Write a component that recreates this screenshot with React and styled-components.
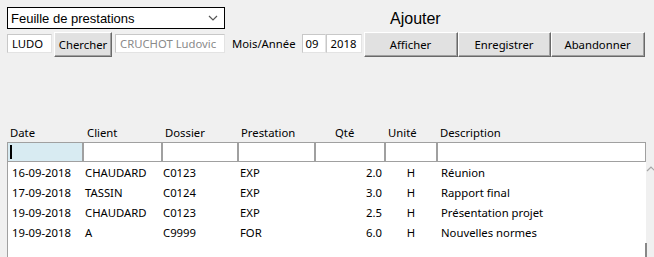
import React, { useState } from 'react';
import styled, { createGlobalStyle } from 'styled-components';

const GlobalStyle = createGlobalStyle`
  html, body {
    margin: 0;
    padding: 0;
    background: #f0f0f0;
    overflow: hidden;
  }
  body {
    font-family: "Noto Sans", "Open Sans", sans-serif;
    font-size: 11.3px;
    color: #000;
  }
`;

const Page = styled.div`
  width: 654px;
  height: 257px;
  padding: 7px 0 0 7px;
  box-sizing: border-box;
  display: flex;
  flex-direction: column;
  overflow: hidden;
`;

const TopRow = styled.div`
  display: flex;
  align-items: flex-start;
  height: 25px;
`;

const Select = styled.div`
  width: 218px;
  height: 22px;
  box-sizing: border-box;
  border: 1px solid #000;
  background: #fff;
  display: flex;
  align-items: center;
  justify-content: space-between;
  padding: 0 6px 0 3px;
  font-family: "Liberation Sans", Arial, sans-serif;
  font-size: 13px;
`;

const Title = styled.div`
  margin: 3px 0 0 165px;
  font-family: "Liberation Sans", Arial, sans-serif;
  font-size: 16px;
  line-height: 18px;
`;

const ToolRow = styled.div`
  display: flex;
  align-items: flex-start;
  height: 26px;
`;

const Field = styled.div`
  width: ${(p) => p.w}px;
  height: 19px;
  margin-top: 2px;
  margin-right: ${(p) => p.mr || 0}px;
  box-sizing: border-box;
  background: #fff;
  border: 1px solid #e3e3e3;
  border-top-color: #c8c8c8;
  border-left-color: #c8c8c8;
  color: ${(p) => (p.muted ? '#8a8a8a' : '#000')};
  padding-left: ${(p) => p.pl || 3}px;
  line-height: 17px;
  white-space: nowrap;
  overflow: hidden;
`;

const Label = styled.div`
  line-height: 19px;
  margin: 2px 6px 0 7px;
`;

const Button = styled.button`
  width: ${(p) => p.w}px;
  height: 25px;
  margin-right: ${(p) => p.mr || 0}px;
  box-sizing: border-box;
  background: #e1e1e1;
  border: 1px solid #fff;
  border-right-color: #696969;
  border-bottom-color: #696969;
  box-shadow: inset -1px -1px 0 #a0a0a0, inset 1px 1px 0 #e3e3e3;
  font-family: "Noto Sans", "Open Sans", sans-serif;
  font-size: 11.3px;
  color: #000;
  padding: 0;
`;

const Spacer = styled.div`
  height: 66px;
`;

const GridRow = styled.div`
  display: grid;
  grid-template-columns: 76px 79px 76px 77px 70px 52px 209px;
  height: ${(p) => p.h}px;
`;

const HeadCell = styled.div`
  padding-left: ${(p) => p.pl}px;
  line-height: 17px;
`;

const FilterInput = styled.div`
  box-sizing: border-box;
  height: 19px;
  border: 1px solid #a0a0a0;
  border-bottom: none;
  background: ${(p) => (p.active ? '#d8ebf2' : '#fff')};
  position: relative;
`;

const Caret = styled.div`
  position: absolute;
  left: 2px;
  top: 2px;
  width: 2px;
  height: 14px;
  background: #000;
`;

const ListArea = styled.div`
  display: flex;
  flex: 1;
  width: 639px;
`;

const List = styled.div`
  flex: 1;
  background: #fff;
  border-top: 1px solid #a0a0a0;
  border-left: 1px solid #a0a0a0;
  padding-top: 1px;
`;

const Row = styled(GridRow)`
  margin-left: -1px;
  line-height: 20px;
  height: 20px;
`;

const Cell = styled.div`
  padding-left: ${(p) => p.pl || 0}px;
  padding-right: ${(p) => p.pr || 0}px;
  text-align: ${(p) => p.align || 'left'};
  white-space: nowrap;
`;

const Scrollbar = styled.div`
  width: 17px;
  display: flex;
  flex-direction: column;
  align-items: center;
  padding-top: 5px;
  position: relative;
`;

const ScrollEdge = styled.div`
  position: absolute;
  left: -1px;
  bottom: 0;
  width: 2px;
  height: 14px;
  background: #888;
`;

const Chevron = ({ up, color }) => (
  <svg width="10" height="6" viewBox="0 0 10 6">
    <polyline
      points={up ? '1,5 5,1 9,5' : '1,1 5,5 9,1'}
      fill="none"
      stroke={color}
      strokeWidth="1.2"
    />
  </svg>
);

const columns = [
  { title: 'Date', pl: 3 },
  { title: 'Client', pl: 4 },
  { title: 'Dossier', pl: 3 },
  { title: 'Prestation', pl: 3 },
  { title: 'Qté', pl: 20 },
  { title: 'Unité', pl: 3 },
  { title: 'Description', pl: 3 },
];

const rows = [
  ['16-09-2018', 'CHAUDARD', 'C0123', 'EXP', '2.0', 'H', 'Réunion'],
  ['17-09-2018', 'TASSIN', 'C0124', 'EXP', '3.0', 'H', 'Rapport final'],
  ['19-09-2018', 'CHAUDARD', 'C0123', 'EXP', '2.5', 'H', 'Présentation projet'],
  ['19-09-2018', 'A', 'C9999', 'FOR', '6.0', 'H', 'Nouvelles normes'],
];

export default function App() {
  const [items] = useState(rows);

  return (
    <>
      <GlobalStyle />
      <Page>
        <TopRow>
          <Select>
            <span>Feuille de prestations</span>
            <Chevron color="#555" />
          </Select>
          <Title>Ajouter</Title>
        </TopRow>
        <ToolRow>
          <Field w={45} mr={2} pl={4}>LUDO</Field>
          <Button w={58} mr={3}>Chercher</Button>
          <Field w={110} muted pl={4}>CRUCHOT Ludovic</Field>
          <Label>Mois/Année</Label>
          <Field w={24}>09</Field>
          <Field w={36} mr={2} pl={4}>2018</Field>
          <Button w={94}>Afficher</Button>
          <Button w={93}>Enregistrer</Button>
          <Button w={94}>Abandonner</Button>
        </ToolRow>
        <Spacer />
        <GridRow h={18}>
          {columns.map((c) => (
            <HeadCell key={c.title} pl={c.pl}>{c.title}</HeadCell>
          ))}
        </GridRow>
        <GridRow h={19}>
          {columns.map((c, i) => (
            <FilterInput key={c.title} active={i === 0}>
              {i === 0 && <Caret />}
            </FilterInput>
          ))}
        </GridRow>
        <ListArea>
          <List>
            {items.map((r, i) => (
              <Row key={i}>
                <Cell pl={5}>{r[0]}</Cell>
                <Cell pl={2}>{r[1]}</Cell>
                <Cell pl={1}>{r[2]}</Cell>
                <Cell pl={2}>{r[3]}</Cell>
                <Cell align="right" pr={3}>{r[4]}</Cell>
                <Cell align="center">{r[5]}</Cell>
                <Cell pl={4}>{r[6]}</Cell>
              </Row>
            ))}
          </List>
          <Scrollbar>
            <Chevron up color="#a6a6a6" />
            <ScrollEdge />
          </Scrollbar>
        </ListArea>
      </Page>
    </>
  );
}
